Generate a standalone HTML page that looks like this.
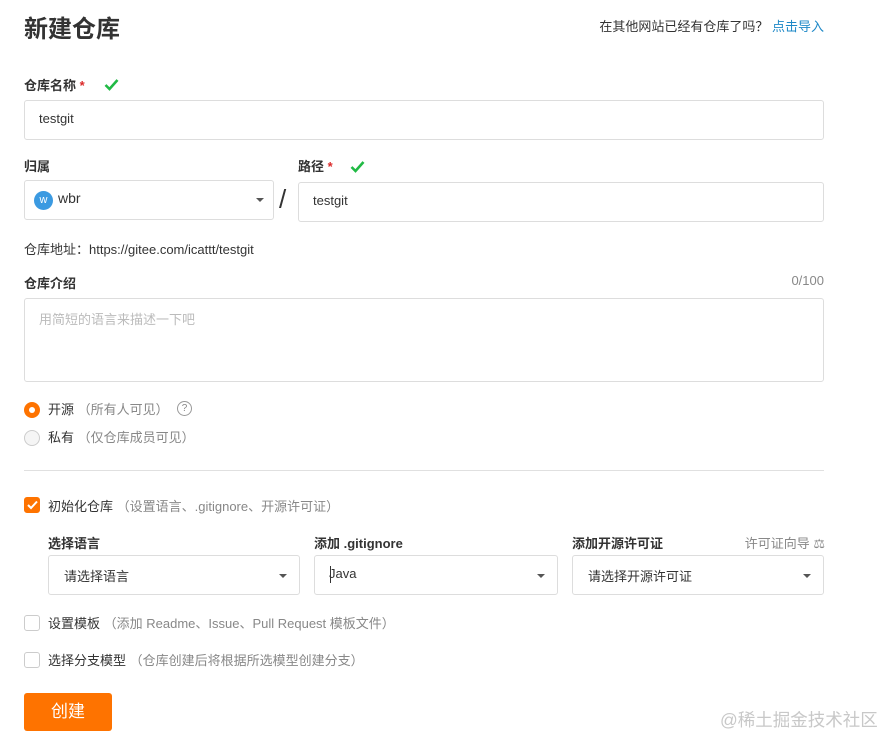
<!DOCTYPE html>
<html><head><meta charset="utf-8"><style>
*{box-sizing:border-box;margin:0;padding:0}
body{width:885px;height:736px;background:#fff;position:relative;overflow:hidden;font-family:"Liberation Sans","Noto Sans CJK SC",sans-serif;color:#333;font-size:13px}
.a{position:absolute;white-space:nowrap}
.lbl{font-weight:bold;font-size:13px;color:#333}
.box{position:absolute;border:1px solid #ddd;border-radius:3px;background:#fff}
.req{color:#db2828}
.gray{color:#888}
.tri{position:absolute;width:0;height:0;border-left:4px solid transparent;border-right:4px solid transparent;border-top:4px solid #555}
.chk{position:absolute;width:16px;height:16px;border:1px solid #ccc;border-radius:3px;background:#fff}
</style></head><body>
<div class="a" style="left:24px;top:9px;font-size:24px;font-weight:bold;color:#333">新建仓库</div>
<div class="a" style="right:61px;top:16px;font-size:13px;color:#333">在其他网站已经有仓库了吗？ <span style="color:#1e88c7">点击导入</span></div>

<div class="a lbl" style="left:24px;top:75px">仓库名称 <span class="req">*</span></div>
<svg class="a" style="left:104px;top:78px" width="15" height="13" viewBox="0 0 15 13"><path d="M1.5 7 L5.5 11 L13.5 2" stroke="#21ba45" stroke-width="2.6" fill="none"/></svg>
<div class="box" style="left:24px;top:100px;width:800px;height:40px"></div>
<div class="a" style="left:39px;top:111px">testgit</div>

<div class="a lbl" style="left:24px;top:156px">归属</div>
<div class="box" style="left:24px;top:180px;width:250px;height:40px"></div>
<div class="a" style="left:34px;top:191px;width:19px;height:19px;border-radius:50%;background:#3b9ae1;color:#fff;font-size:11px;text-align:center;line-height:19px">w</div>
<div class="a" style="left:58px;top:190px;font-size:14px">wbr</div>
<div class="tri" style="left:256px;top:198px"></div>
<div class="a" style="left:279px;top:184px;font-size:26px;color:#333">/</div>
<div class="a lbl" style="left:298px;top:156px">路径 <span class="req">*</span></div>
<svg class="a" style="left:350px;top:160px" width="15" height="13" viewBox="0 0 15 13"><path d="M1.5 7 L5.5 11 L13.5 2" stroke="#21ba45" stroke-width="2.6" fill="none"/></svg>
<div class="box" style="left:298px;top:182px;width:526px;height:40px"></div>
<div class="a" style="left:313px;top:193px">testgit</div>

<div class="a" style="left:24px;top:239px">仓库地址：https://gitee.com/icattt/testgit</div>
<div class="a lbl" style="left:24px;top:273px">仓库介绍</div>
<div class="a gray" style="right:61px;top:273px">0/100</div>
<div class="box" style="left:24px;top:298px;width:800px;height:84px"></div>
<div class="a" style="left:39px;top:309px;color:#bbb">用简短的语言来描述一下吧</div>

<div class="a" style="left:24px;top:402px;width:16px;height:16px;border-radius:50%;background:#fe7300"></div>
<div class="a" style="left:29px;top:407px;width:6px;height:6px;border-radius:50%;background:#fff"></div>
<div class="a" style="left:48px;top:399px">开源 <span class="gray">（所有人可见）</span></div>
<div class="a" style="left:177px;top:401px;width:15px;height:15px;border:1px solid #999;border-radius:50%;font-size:10px;color:#888;text-align:center;line-height:13px">?</div>
<div class="a" style="left:24px;top:430px;width:16px;height:16px;border-radius:50%;border:1px solid #ccc;background:#f5f5f5"></div>
<div class="a" style="left:48px;top:427px">私有 <span class="gray">（仅仓库成员可见）</span></div>

<div class="a" style="left:24px;top:470px;width:800px;height:1px;background:#e0e0e0"></div>

<div class="chk" style="left:24px;top:497px;background:#fe7300;border-color:#fe7300"></div>
<svg class="a" style="left:27px;top:500px" width="11" height="10" viewBox="0 0 11 10"><path d="M1 5 L4 8 L10 1.5" stroke="#fff" stroke-width="2" fill="none"/></svg>
<div class="a" style="left:48px;top:496px">初始化仓库 <span class="gray">（设置语言、.gitignore、开源许可证）</span></div>

<div class="a lbl" style="left:48px;top:533px">选择语言</div>
<div class="a lbl" style="left:314px;top:533px">添加 .gitignore</div>
<div class="a lbl" style="left:572px;top:533px">添加开源许可证</div>
<div class="a gray" style="right:60px;top:533px">许可证向导 ⚖</div>
<div class="box" style="left:48px;top:555px;width:252px;height:40px"></div>
<div class="a" style="left:64px;top:566px">请选择语言</div>
<div class="tri" style="left:279px;top:574px"></div>
<div class="box" style="left:314px;top:555px;width:244px;height:40px"></div>
<div class="a" style="left:329px;top:566px">Java</div>
<div class="a" style="left:330px;top:566px;width:1px;height:17px;background:#333"></div>
<div class="tri" style="left:537px;top:574px"></div>
<div class="box" style="left:572px;top:555px;width:252px;height:40px"></div>
<div class="a" style="left:588px;top:566px">请选择开源许可证</div>
<div class="tri" style="left:803px;top:574px"></div>

<div class="chk" style="left:24px;top:615px"></div>
<div class="a" style="left:48px;top:613px">设置模板 <span class="gray">（添加 Readme、Issue、Pull Request 模板文件）</span></div>
<div class="chk" style="left:24px;top:652px"></div>
<div class="a" style="left:48px;top:650px">选择分支模型 <span class="gray">（仓库创建后将根据所选模型创建分支）</span></div>

<div class="a" style="left:24px;top:693px;width:88px;height:38px;background:#fe7300;border-radius:3px;color:#fff;font-size:17px;text-align:center;line-height:38px">创建</div>
<div class="a" style="left:720px;top:707px;font-size:17.5px;color:#c8c8c8">@稀土掘金技术社区</div>
</body></html>
